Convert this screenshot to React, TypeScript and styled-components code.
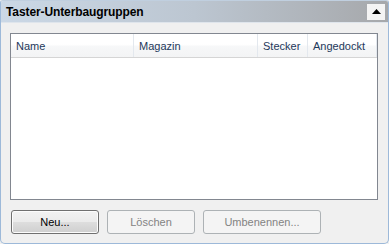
import styled, { createGlobalStyle } from 'styled-components';

const GlobalStyle = createGlobalStyle`
  html, body {
    margin: 0;
    padding: 0;
    background: #f0f0f0;
  }
  body {
    font-family: "Liberation Sans", "DejaVu Sans", sans-serif;
    font-size: 11px;
  }
`;

const Panel = styled.div`
  box-sizing: border-box;
  width: 389px;
  height: 244px;
  border: 1px solid #9db9d9;
  border-top-color: #c0cfdf;
  border-radius: 3px 3px 5px 5px;
  background: #f0f0f0;
  display: flex;
  flex-direction: column;
  overflow: hidden;
`;

const TitleBar = styled.div`
  height: 21px;
  flex: none;
  display: flex;
  align-items: center;
  justify-content: space-between;
  padding: 0 3px 0 5px;
  background: linear-gradient(to right, #cbd8e6 0%, #bcc6d1 50%, #a6a8ab 100%);
  border-bottom: 1px solid #dfe5ec;
`;

const Title = styled.div`
  font-weight: bold;
  font-size: 12px;
  color: #000;
  letter-spacing: -0.1px;
`;

const CollapseButton = styled.div`
  width: 18px;
  height: 16px;
  background: #f4f4f4;
  display: flex;
  align-items: center;
  justify-content: center;
`;

const Body = styled.div`
  flex: 1;
  display: flex;
  flex-direction: column;
  padding: 10px 10px 9px 9px;
`;

const ListBox = styled.div`
  height: 165px;
  border: 1px solid #828790;
  background: #fff;
  display: flex;
  flex-direction: column;
`;

const HeaderRow = styled.div`
  height: 23px;
  display: grid;
  grid-template-columns: 123px 124px 50px 1fr;
  background: linear-gradient(to bottom, #ffffff 0%, #ffffff 45%, #f6f7f8 55%, #f3f4f5 100%);
  border-bottom: 1px solid #d5d5d5;
`;

const HeaderCell = styled.div`
  display: flex;
  align-items: center;
  padding-left: 5px;
  color: #1e395b;
  font-size: 11px;
  border-right: 1px solid #e3e8ee;
  white-space: nowrap;
  overflow: hidden;
`;

const ButtonRow = styled.div`
  display: flex;
  gap: 8px;
  margin-top: 10px;
  padding-left: 1px;
`;

const Button = styled.button<{ $width: number }>`
  width: ${p => p.$width}px;
  height: 24px;
  box-sizing: border-box;
  font-family: "Liberation Sans", "DejaVu Sans", sans-serif;
  font-size: 11px;
  border-radius: 3px;
  padding: 0;
  color: #000;
  border: 1px solid #707070;
  background: linear-gradient(to bottom, #f2f2f2 0%, #ebebeb 48%, #dddddd 52%, #cfcfcf 100%);
  box-shadow: inset 0 0 0 1px #fcfcfc;

  &:disabled {
    color: #838383;
    border-color: #adb2b5;
    background: #f4f4f4;
    box-shadow: none;
  }
`;

export default function App() {
  return (
    <>
      <GlobalStyle />
      <Panel>
        <TitleBar>
          <Title>Taster-Unterbaugruppen</Title>
          <CollapseButton>
            <svg width="9" height="5" viewBox="0 0 9 5">
              <polygon points="0,5 9,5 4.5,0" fill="#000" />
            </svg>
          </CollapseButton>
        </TitleBar>
        <Body>
          <ListBox>
            <HeaderRow>
              <HeaderCell>Name</HeaderCell>
              <HeaderCell>Magazin</HeaderCell>
              <HeaderCell>Stecker</HeaderCell>
              <HeaderCell>Angedockt</HeaderCell>
            </HeaderRow>
          </ListBox>
          <ButtonRow>
            <Button $width={88}>Neu...</Button>
            <Button $width={88} disabled>Löschen</Button>
            <Button $width={118} disabled>Umbenennen...</Button>
          </ButtonRow>
        </Body>
      </Panel>
    </>
  );
}
